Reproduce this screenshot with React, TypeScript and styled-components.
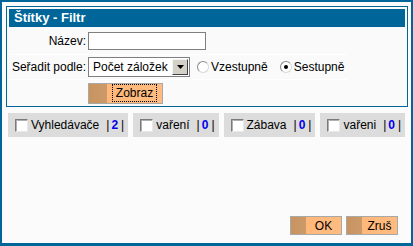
import { styled, createGlobalStyle } from "styled-components";

const GlobalStyle = createGlobalStyle`
  html, body {
    margin: 0;
    padding: 0;
    background: #ffffff;
  }
  body {
    font-family: "Liberation Sans", Arial, sans-serif;
    font-size: 12px;
    color: #000;
  }
`;

interface Tag {
  name: string;
  count: number;
}

const tags: Tag[] = [
  { name: "Vyhledávače", count: 2 },
  { name: "vaření", count: 0 },
  { name: "Zábava", count: 0 },
  { name: "vařeni", count: 0 },
];

const App = () => {
  return (
    <>
      <GlobalStyle />
      <WindowStyled>
        <PanelStyled>
          <HeaderStyled>Štítky - Filtr</HeaderStyled>
          <FormRow $height={27}>
            <LabelStyled>Název:</LabelStyled>
            <TextInput type="text" />
          </FormRow>
          <FormRow $height={24}>
            <LabelStyled>Seřadit podle:</LabelStyled>
            <SelectBox>
              <SelectText>Počet záložek</SelectText>
              <SelectArrow>
                <svg width="7" height="4" viewBox="0 0 7 4">
                  <path d="M0 0h7L3.5 4z" fill="#000" />
                </svg>
              </SelectArrow>
            </SelectBox>
            <RadioGroup>
              <RadioLabel>
                <RadioDot $checked={false} />
                Vzestupně
              </RadioLabel>
              <RadioLabel>
                <RadioDot $checked={true} />
                Sestupně
              </RadioLabel>
            </RadioGroup>
          </FormRow>
          <FormRow $height={26} $last>
            <LabelStyled />
            <OrangeButton $width={75} $height={21} $dark={18}>
              <FocusText>Zobraz</FocusText>
            </OrangeButton>
          </FormRow>
        </PanelStyled>

        <TagsRow>
          {tags.map((tag, i) => (
            <TagBox key={i}>
              <CheckBox />
              <TagName>{tag.name}</TagName>
              <CountWrap>
                |<CountStyled>{tag.count}</CountStyled>|
              </CountWrap>
            </TagBox>
          ))}
        </TagsRow>

        <FooterStyled>
          <OrangeButton $width={52} $height={19} $dark={15}>
            OK
          </OrangeButton>
          <OrangeButton $width={52} $height={19} $dark={15}>
            Zruš
          </OrangeButton>
        </FooterStyled>
      </WindowStyled>
    </>
  );
};

const WindowStyled = styled.div`
  width: 413px;
  height: 246px;
  box-sizing: border-box;
  border: 2px solid #006699;
  border-bottom-width: 3px;
  background: #fbfbfb;
  padding: 4px 3px 0 4px;
  display: flex;
  flex-direction: column;
`;

const PanelStyled = styled.div`
  border: 1px solid #006699;
  padding: 2px 2px 0 2px;
  background: #fafafa;
`;

const HeaderStyled = styled.div`
  height: 18px;
  line-height: 18px;
  background: #006699;
  color: #ffffff;
  font-weight: bold;
  font-size: 13px;
  padding-left: 5px;
`;

const FormRow = styled.div<{ $height: number; $last?: boolean }>`
  display: flex;
  align-items: center;
  height: ${(p) => p.$height}px;
  width: 338px;
  border-bottom: ${(p) => (p.$last ? "none" : "1px solid #ffffff")};
`;

const LabelStyled = styled.div`
  width: 77px;
  text-align: right;
  margin-right: 2px;
  flex-shrink: 0;
`;

const TextInput = styled.input`
  width: 118px;
  height: 18px;
  box-sizing: border-box;
  border: 1px solid #7f7f7f;
  background: #ffffff;
  padding: 0 2px;
  margin: 0;
  outline: none;
`;

const SelectBox = styled.div`
  width: 102px;
  height: 20px;
  box-sizing: border-box;
  border: 1px solid #7f7f7f;
  background: #ffffff;
  display: flex;
  align-items: center;
  justify-content: space-between;
  padding: 1px;
`;

const SelectText = styled.span`
  padding-left: 3px;
  white-space: nowrap;
`;

const SelectArrow = styled.span`
  width: 16px;
  height: 16px;
  box-sizing: border-box;
  background: #d4d0c8;
  border: 1px solid;
  border-color: #f4f4f4 #404040 #404040 #f4f4f4;
  display: flex;
  align-items: center;
  justify-content: center;
`;

const RadioGroup = styled.div`
  display: flex;
  align-items: center;
  gap: 12px;
  margin-left: 7px;
`;

const RadioLabel = styled.label`
  display: flex;
  align-items: center;
  gap: 2px;
  white-space: nowrap;
`;

const RadioDot = styled.span<{ $checked: boolean }>`
  width: 12px;
  height: 12px;
  box-sizing: border-box;
  border-radius: 50%;
  border: 1px solid;
  border-color: #8a8a8a #d8d8d8 #d8d8d8 #8a8a8a;
  background: #ffffff;
  display: flex;
  align-items: center;
  justify-content: center;

  &::after {
    content: "";
    width: 4px;
    height: 4px;
    border-radius: 50%;
    background: ${(p) => (p.$checked ? "#000" : "transparent")};
  }
`;

const OrangeButton = styled.div<{ $width: number; $height: number; $dark: number }>`
  width: ${(p) => p.$width}px;
  height: ${(p) => p.$height}px;
  box-sizing: border-box;
  border: 1px solid #a8a8a8;
  background: linear-gradient(
    to right,
    #c8935f 0,
    #cc9a6a ${(p) => p.$dark}px,
    #ffb87a ${(p) => p.$dark}px,
    #ffbb80 100%
  );
  padding-left: ${(p) => p.$dark}px;
  display: flex;
  align-items: center;
  justify-content: center;
  color: #000;
  cursor: default;
`;

const FocusText = styled.span`
  border: 1px dotted #000;
  padding: 1px 3px;
  line-height: 14px;
`;

const TagsRow = styled.div`
  display: flex;
  gap: 5px;
  margin: 6px 0 0 2px;
`;

const TagBox = styled.div`
  height: 24px;
  display: flex;
  align-items: center;
  background: #dcdcdc;
  padding: 0 4px 0 7px;
`;

const CheckBox = styled.span`
  width: 13px;
  height: 13px;
  box-sizing: border-box;
  border: 1px solid;
  border-color: #7a7a7a #e8e8e8 #e8e8e8 #7a7a7a;
  background: #ffffff;
  box-shadow: inset 1px 1px 0 #b0b0b0;
  margin-right: 3px;
`;

const TagName = styled.span`
  margin-right: 7px;
`;

const CountWrap = styled.span`
  white-space: nowrap;
`;

const CountStyled = styled.b`
  color: #0000ee;
  padding: 0 3px 0 2px;
`;

const FooterStyled = styled.div`
  margin-top: auto;
  margin-bottom: 8px;
  display: flex;
  justify-content: flex-end;
  gap: 4px;
  padding-right: 10px;
`;

export default App;
